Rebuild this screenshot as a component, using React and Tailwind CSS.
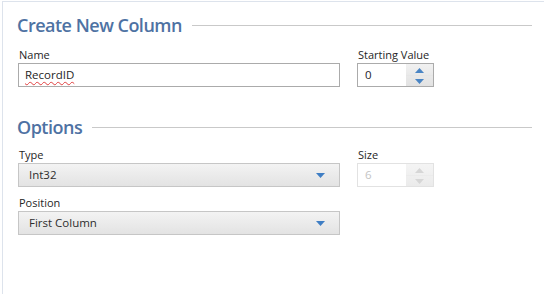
import React from 'react';

const font = { fontFamily: '"Open Sans", "Noto Sans", sans-serif' };

// small triangle used by combos and spinners
const Tri = ({ up, className }) => (
  <svg width="9" height="5" viewBox="0 0 9 5" className={className}>
    {up ? <polygon points="0,5 9,5 4.5,0" fill="currentColor" /> : <polygon points="0,0 9,0 4.5,5" fill="currentColor" />}
  </svg>
);

const SectionHeader = ({ title, className }) => (
  <div className={`flex items-center h-[28px] pr-[12px] ${className}`}>
    <span className="text-[18px] font-semibold text-[#4e72a3] leading-none tracking-[-0.5px]">{title}</span>
    <div className="flex-1 h-px bg-[#c9c9c9] ml-[10px] mt-[1px]" />
  </div>
);

const Label = ({ children }) => (
  <div className="h-[16px] text-[11px] leading-[16px] text-[#262626] pl-[1px]">{children}</div>
);

const Combo = ({ value }) => (
  <div className="h-[24px] flex items-center justify-between border border-[#c6c6c6] bg-gradient-to-b from-[#f3f3f3] to-[#e3e3e3] pl-[10px] pr-[14px]">
    <span className="text-[11.5px] text-[#2e2e2e]">{value}</span>
    <Tri className="text-[#3f7ec4]" />
  </div>
);

const Spin = ({ value, disabled }) => (
  <div className={`h-[24px] flex border ${disabled ? 'border-[#e2e2e2]' : 'border-[#ababab]'}`}>
    <div className={`flex-1 flex items-center pl-[7px] text-[11.5px] bg-white ${disabled ? 'text-[#c4c4c4]' : 'text-[#1c1c2c]'}`}>{value}</div>
    <div className={`w-[27px] flex flex-col bg-gradient-to-b ${disabled ? 'from-[#f4f4f4] to-[#ebebeb] text-[#d6d6d6]' : 'from-[#f1f1f1] to-[#e2e2e2] text-[#4a85c4]'}`}>
      <div className="flex-1 flex items-center justify-center pt-[1px]"><Tri up /></div>
      <div className={`flex-1 flex items-center justify-center border-t ${disabled ? 'border-[#ebebeb]' : 'border-[#e6e6e6]'}`}><Tri /></div>
    </div>
  </div>
);

export default function App() {
  return (
    <div className="w-[544px] h-[294px] bg-white overflow-hidden pt-[1px] pl-[2px]" style={font}>
      <div className="h-full border-l border-t border-[#dde3ec] pl-[14px]">
        <SectionHeader title="Create New Column" className="mt-[9px]" />

        {/* name + starting value */}
        <div className="flex gap-[17px] mt-[8px] pl-[1px]">
          <div className="w-[322px]">
            <Label>Name</Label>
            <div className="h-[24px] flex items-center border border-[#ababab] pl-[6px] text-[11.5px] text-[#1e1e1e]">
              <span className="underline decoration-wavy decoration-[#e04040] decoration-1 underline-offset-[2px]">RecordID</span>
            </div>
          </div>
          <div className="w-[77px]">
            <Label>Starting Value</Label>
            <Spin value="0" />
          </div>
        </div>

        <SectionHeader title="Options" className="mt-[26px]" />

        {/* type + size */}
        <div className="flex gap-[17px] mt-[6px] pl-[1px]">
          <div className="w-[322px]">
            <Label>Type</Label>
            <Combo value="Int32" />
            <div className="mt-[8px]">
              <Label>Position</Label>
              <Combo value="First Column" />
            </div>
          </div>
          <div className="w-[77px]">
            <Label>Size</Label>
            <Spin value="6" disabled />
          </div>
        </div>
      </div>
    </div>
  );
}
